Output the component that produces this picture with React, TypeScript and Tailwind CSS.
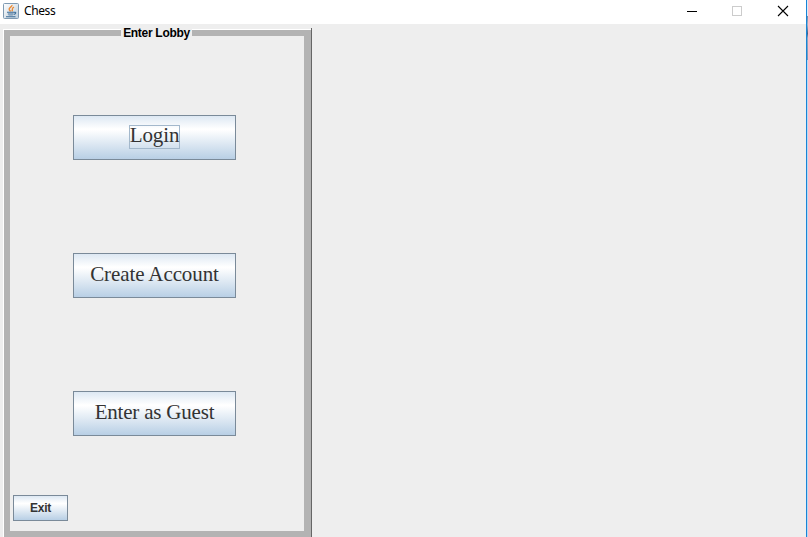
import type { ReactNode } from "react";

function JavaIcon() {
  return (
    <svg width="16" height="16" viewBox="0 0 16 16" fill="none">
      <defs>
        <linearGradient id="tile" x1="0" y1="0" x2="1" y2="1">
          <stop offset="0" stopColor="#ffffff" />
          <stop offset="1" stopColor="#bccddb" />
        </linearGradient>
      </defs>
      <rect x=".5" y=".5" width="15" height="15" rx="1" fill="url(#tile)" stroke="#7f9ab2" />
      <path d="M9 2C9.6 4.2 3.4 5 7.6 8.4M11 4.2C7.8 5.4 10.4 6.4 8.8 8.4" stroke="#ec8a35" strokeWidth="1.4" />
      <path d="M4 9.3h7M4.8 11h5.6M3 13.7h9.5M11 9.4c2.6-.8 2.2 1.6-.2 2" stroke="#3b6c98" strokeWidth="1.1" />
      <path d="M5.5 12.3h4.3" stroke="#7c9bb8" strokeWidth=".8" />
    </svg>
  );
}

function TitleBar() {
  return (
    <header className="flex h-6 shrink-0 items-start bg-white">
      <div className="flex items-center pt-[3px] pl-[3px]">
        <JavaIcon />
        <span className="pl-[5px] font-['Noto_Sans',sans-serif] text-[12px] leading-4 tracking-[-0.4px] text-black">Chess</span>
      </div>
      <div className="ml-auto flex pr-[17px]">
        <svg width="102" height="24" fill="none" shapeRendering="crispEdges">
          <path d="M0 11.5h10" stroke="#000" />
          <rect x="45.5" y="6.5" width="9" height="9" stroke="#cccccc" />
          <path d="M91 6l10 10M101 6l-10 10" stroke="#000" strokeWidth="1.1" shapeRendering="auto" />
        </svg>
      </div>
    </header>
  );
}

const metal =
  "flex items-center justify-center border border-[#7a8a99] bg-[linear-gradient(to_bottom,#dde8f3_0%,#ffffff_30%,#ffffff_32%,#b8cfe5_100%)] text-[#333333]";

function LobbyButton({ children }: { children: ReactNode }) {
  return (
    <button className={`${metal} h-[45px] w-[163px] pb-[3px] font-['Liberation_Serif',serif] text-[21px] leading-none whitespace-nowrap`}>
      {children}
    </button>
  );
}

export default function App() {
  return (
    <div className="flex h-[537px] w-[808px] overflow-hidden bg-[#eeeeee]">
      <div className="flex w-[806px] flex-col">
        <TitleBar />
        <main className="flex flex-1 pt-1 pl-[3px]">
          <fieldset className="flex w-[309px] border-r border-[#666666] pt-px">
            <div className="flex w-[308px] flex-col border-t border-l border-white">
              <div className="flex h-[507px] flex-col border-[6px] border-r-[7px] border-[#b3b3b3]">
                <h1 className="-mt-[10px] mb-[74px] ml-[111px] flex h-[15px] w-[71px] items-center justify-center bg-[#eeeeee] font-['Liberation_Sans',Arial,sans-serif] text-[12px] leading-[15px] font-bold tracking-[-0.3px] whitespace-nowrap text-black">
                  Enter Lobby
                </h1>
                <div className="flex flex-col gap-[93px] pl-[63px]">
                  <LobbyButton>
                    <span className="mt-[2px] flex h-6 w-[51px] items-center justify-center border border-[#a3b8cc] pb-[3px] tracking-[-0.1px]">Login</span>
                  </LobbyButton>
                  <LobbyButton><span className="tracking-[-0.1px]">Create Account</span></LobbyButton>
                  <LobbyButton><span className="tracking-[-0.2px]">Enter as Guest</span></LobbyButton>
                </div>
                <button className={`${metal} mt-[59px] ml-[3px] h-[26px] w-[55px] font-['Liberation_Sans',Arial,sans-serif] text-[12px] leading-none font-bold tracking-[-0.2px]`}>
                  Exit
                </button>
              </div>
            </div>
          </fieldset>
        </main>
      </div>
      <div className="w-px bg-[#1883d7]" />
      <div className="flex w-px flex-col bg-[#b9d9f1]">
        <div className="h-4 bg-[#dceaf6]" />
        <div className="h-11 bg-[linear-gradient(to_bottom,#6b8aa6,#9bb5cb_20%,#38628a_40%,#8ba9c2_50%,#7399b9)]" />
      </div>
    </div>
  );
}
